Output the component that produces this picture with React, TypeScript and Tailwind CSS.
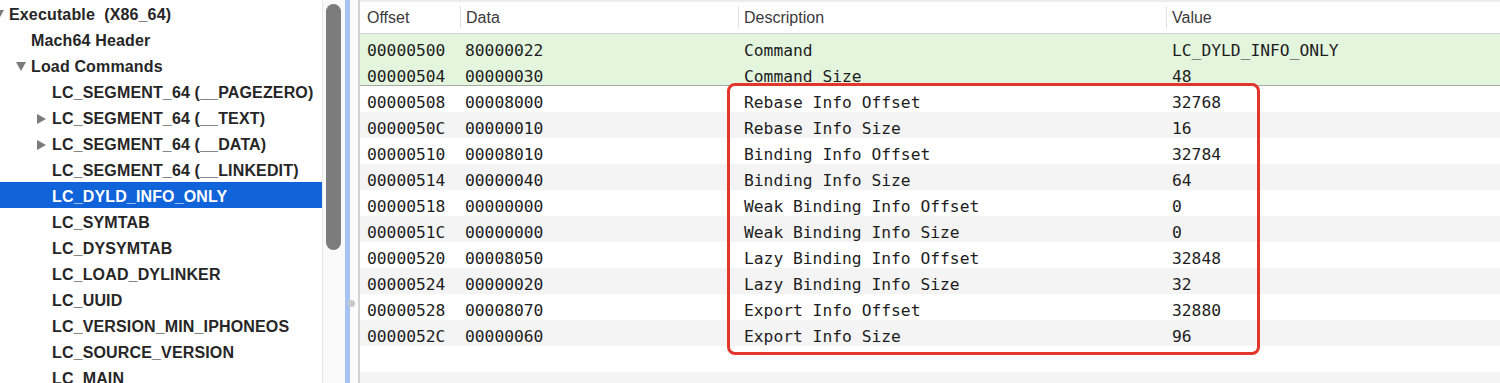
type TreeItem = {
  label: string;
  level: 0 | 1 | 2;
  arrow?: 'down' | 'right';
  selected?: boolean;
};

const tree: TreeItem[] = [
  { label: 'Executable  (X86_64)', level: 0, arrow: 'down' },
  { label: 'Mach64 Header', level: 1 },
  { label: 'Load Commands', level: 1, arrow: 'down' },
  { label: 'LC_SEGMENT_64 (__PAGEZERO)', level: 2 },
  { label: 'LC_SEGMENT_64 (__TEXT)', level: 2, arrow: 'right' },
  { label: 'LC_SEGMENT_64 (__DATA)', level: 2, arrow: 'right' },
  { label: 'LC_SEGMENT_64 (__LINKEDIT)', level: 2 },
  { label: 'LC_DYLD_INFO_ONLY', level: 2, selected: true },
  { label: 'LC_SYMTAB', level: 2 },
  { label: 'LC_DYSYMTAB', level: 2 },
  { label: 'LC_LOAD_DYLINKER', level: 2 },
  { label: 'LC_UUID', level: 2 },
  { label: 'LC_VERSION_MIN_IPHONEOS', level: 2 },
  { label: 'LC_SOURCE_VERSION', level: 2 },
  { label: 'LC_MAIN', level: 2 },
];

const levelPad = ['pl-[9px]', 'pl-[31px]', 'pl-[52px]'];

const rows = [
  ['00000500', '80000022', 'Command', 'LC_DYLD_INFO_ONLY'],
  ['00000504', '00000030', 'Command Size', '48'],
  ['00000508', '00008000', 'Rebase Info Offset', '32768'],
  ['0000050C', '00000010', 'Rebase Info Size', '16'],
  ['00000510', '00008010', 'Binding Info Offset', '32784'],
  ['00000514', '00000040', 'Binding Info Size', '64'],
  ['00000518', '00000000', 'Weak Binding Info Offset', '0'],
  ['0000051C', '00000000', 'Weak Binding Info Size', '0'],
  ['00000520', '00008050', 'Lazy Binding Info Offset', '32848'],
  ['00000524', '00000020', 'Lazy Binding Info Size', '32'],
  ['00000528', '00008070', 'Export Info Offset', '32880'],
  ['0000052C', '00000060', 'Export Info Size', '96'],
];

function Arrow({ dir }: { dir: 'down' | 'right' }) {
  return dir === 'down' ? (
    <svg width="10" height="9" viewBox="0 0 10 9">
      <polygon points="0,0 10,0 5,9" fill="#7b7b7b" />
    </svg>
  ) : (
    <svg width="9" height="10" viewBox="0 0 9 10">
      <polygon points="0,0 9,5 0,10" fill="#7b7b7b" />
    </svg>
  );
}

function rowBg(i: number) {
  if (i < 2) return 'bg-[#e4f5de]';
  return i % 2 === 1 ? 'bg-[#f4f4f4]' : 'bg-white';
}

function App() {
  return (
    <div className="relative flex h-[383px] w-[1500px] overflow-hidden bg-white">
      {/* outline tree */}
      <div className="w-[322px] shrink-0 overflow-hidden font-['Liberation_Sans',Arial,sans-serif] text-[16px] font-bold tracking-[0.15px]">
        {tree.map((t) => (
          <div
            key={t.label}
            className={`flex h-[26px] items-center pt-[3px] whitespace-pre ${levelPad[t.level]} ${
              t.selected ? 'bg-[#1063d8] text-white' : 'text-[#262626]'
            }`}
          >
            {t.arrow && (
              <span className="-ml-[15px] flex w-[15px] items-center">
                <Arrow dir={t.arrow} />
              </span>
            )}
            {t.label}
          </div>
        ))}
      </div>

      {/* overlay scroller */}
      <div className="w-[23px] shrink-0 border-l border-[#e9e9e9] bg-[#f9f9f9] pl-[3px] pt-[4px]">
        <div className="h-[246px] w-[15px] rounded-full bg-[#7c7c7c]" />
      </div>

      {/* split divider */}
      <div className="w-[5px] shrink-0 bg-[#a7c3f1]" />
      <div className="w-[8px] shrink-0 bg-[#fbfbfb]" />
      <div className="w-[2px] shrink-0 bg-[#d3d3d3]" />

      {/* table */}
      <div className="flex-1">
        <div className="grid h-[34px] grid-cols-[100px_278px_428px_1fr] border-t-2 border-b border-[#ececec] border-b-[#d6d6d6] font-['Liberation_Sans',Arial,sans-serif] text-[16px] text-[#3a3a3a]">
          <div className="flex items-center pl-[7px]">Offset</div>
          <div className="flex items-center">
            <div className="flex h-[23px] items-center border-l border-[#e2e2e2] pl-[5px]">Data</div>
          </div>
          <div className="flex items-center">
            <div className="flex h-[23px] items-center border-l border-[#e2e2e2] pl-[5px]">Description</div>
          </div>
          <div className="flex items-center">
            <div className="flex h-[23px] items-center border-l border-[#e2e2e2] pl-[5px]">Value</div>
          </div>
        </div>

        <div className="font-['DejaVu_Sans_Mono',Menlo,monospace] text-[16.3px] text-[#1d1d1d]">
          {rows.map((r, i) => (
            <div
              key={r[0]}
              className={`grid h-[26px] grid-cols-[100px_278px_428px_1fr] items-center pt-[7px] whitespace-pre ${rowBg(i)} ${
                i === 1 ? 'border-b border-[#a9a9a9]' : ''
              }`}
            >
              <div className="pl-[7px] leading-[19px]">{r[0]}</div>
              <div className="pl-[5px] leading-[19px]">{r[1]}</div>
              <div className="pl-[6px] leading-[19px]">{r[2]}</div>
              <div className="pl-[6px] leading-[19px]">{r[3]}</div>
            </div>
          ))}
          <div className="h-[26px] bg-white" />
          <div className="h-[26px] bg-[#f4f4f4]" />
        </div>
      </div>

      {/* split handle dot */}
      <div className="absolute left-[348px] top-[300px] h-[7px] w-[7px] rounded-full bg-[#c9c9c9]" />

      {/* red highlight annotation */}
      <div className="absolute left-[727px] top-[83px] h-[272px] w-[533px] rounded-[8px] border-[3px] border-[#e2352b]" />
    </div>
  );
}

export default App;
